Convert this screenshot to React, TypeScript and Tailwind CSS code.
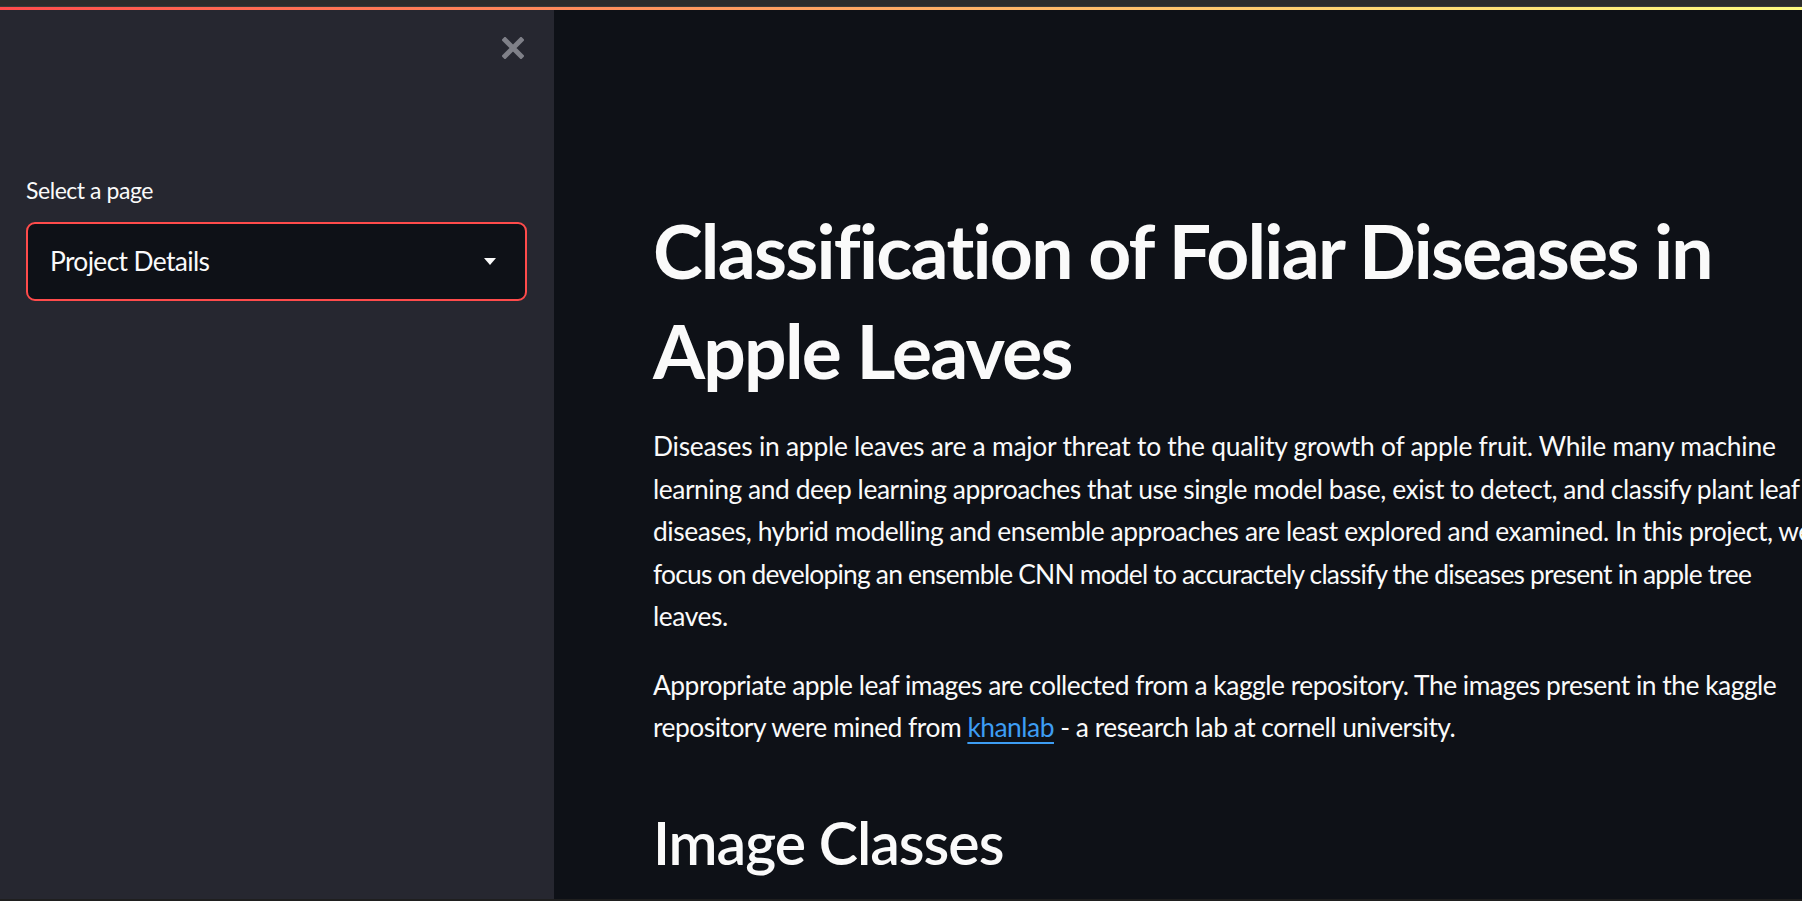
import React from 'react'

const font = { fontFamily: '"Source Sans Pro", Lato, "Noto Sans", sans-serif' }

function CloseIcon() {
  return (
    <svg width="22" height="22" viewBox="0 0 22 22" fill="none">
      <path d="M3 3 L19 19 M19 3 L3 19" stroke="#7f8088" strokeWidth="5" strokeLinecap="square" />
    </svg>
  )
}

function Sidebar() {
  return (
    <aside className="w-[554px] shrink-0 bg-[#262730] flex flex-col">
      <div className="flex justify-end pt-[30px] pr-[30px]">
        <button className="w-[22px] h-[22px] flex items-center justify-center" aria-label="Close sidebar">
          <CloseIcon />
        </button>
      </div>
      <div className="px-[26px] pt-[116px]">
        <label className="block text-[23px] leading-[30px] tracking-[-0.45px] text-[#fafafa]">Select a page</label>
        <div className="mt-[17px] h-[79px] w-[501px] rounded-[9px] border-2 border-[#ff4b4b] bg-[#0e1117] flex items-center justify-between pl-[22px] pr-[29px]">
          <span className="text-[26.4px] tracking-[-0.65px] text-[#fafafa]">Project Details</span>
          <svg width="12" height="7" viewBox="0 0 12 7">
            <path d="M0 0 L12 0 L6 7 Z" fill="#fafafa" />
          </svg>
        </div>
      </div>
    </aside>
  )
}

function Content() {
  return (
    <main className="flex-1 bg-[#0e1117] overflow-hidden text-[#fafafa]">
      <div className="pl-[99px] pt-[193px] whitespace-nowrap">
        <h1 className="text-[75px] leading-[100px] font-bold tracking-[-1.75px]">
          Classification of Foliar Diseases in
          <br />
          Apple Leaves
        </h1>
        <p className="mt-[25px] text-[26.4px] leading-[42.5px] tracking-[-0.45px]">
          <span className="tracking-[-0.25px]">
            Diseases in apple leaves are a major threat to the quality growth of apple fruit. While many machine
          </span>
          <br />
          learning and deep learning approaches that use single model base, exist to detect, and classify plant leaf
          <br />
          diseases, hybrid modelling and ensemble approaches are least explored and examined. In this project, we
          <br />
          <span className="tracking-[-0.8px]">
            focus on developing an ensemble CNN model to accuractely classify the diseases present in apple tree
          </span>
          <br />
          leaves.
        </p>
        <p className="mt-[26px] text-[26.4px] leading-[42.5px] tracking-[-0.5px]">
          Appropriate apple leaf images are collected from a kaggle repository. The images present in the kaggle
          <br />
          repository were mined from{' '}
          <a href="#" className="text-[#3d9df3] underline underline-offset-[5px]">khanlab</a>
          {' '}- a research lab at cornell university.
        </p>
        <h2 className="mt-[58px] text-[59px] leading-[71px] font-semibold tracking-[-1px]">Image Classes</h2>
      </div>
    </main>
  )
}

export default function App() {
  return (
    <div className="h-[901px] w-full overflow-hidden flex flex-col bg-[#0e1117]" style={font}>
      <div className="h-[7px] bg-[#2c2c2c] border-b border-[#3a3a3a]" />
      <div className="relative flex-1 flex min-h-0">
        <div className="absolute left-0 right-0 top-0 h-[3px] bg-gradient-to-r from-[#ff4b4b] to-[#fffd80] z-10" />
        <Sidebar />
        <Content />
      </div>
      <div className="h-[2px] bg-[#1f1f1f]" />
    </div>
  )
}
